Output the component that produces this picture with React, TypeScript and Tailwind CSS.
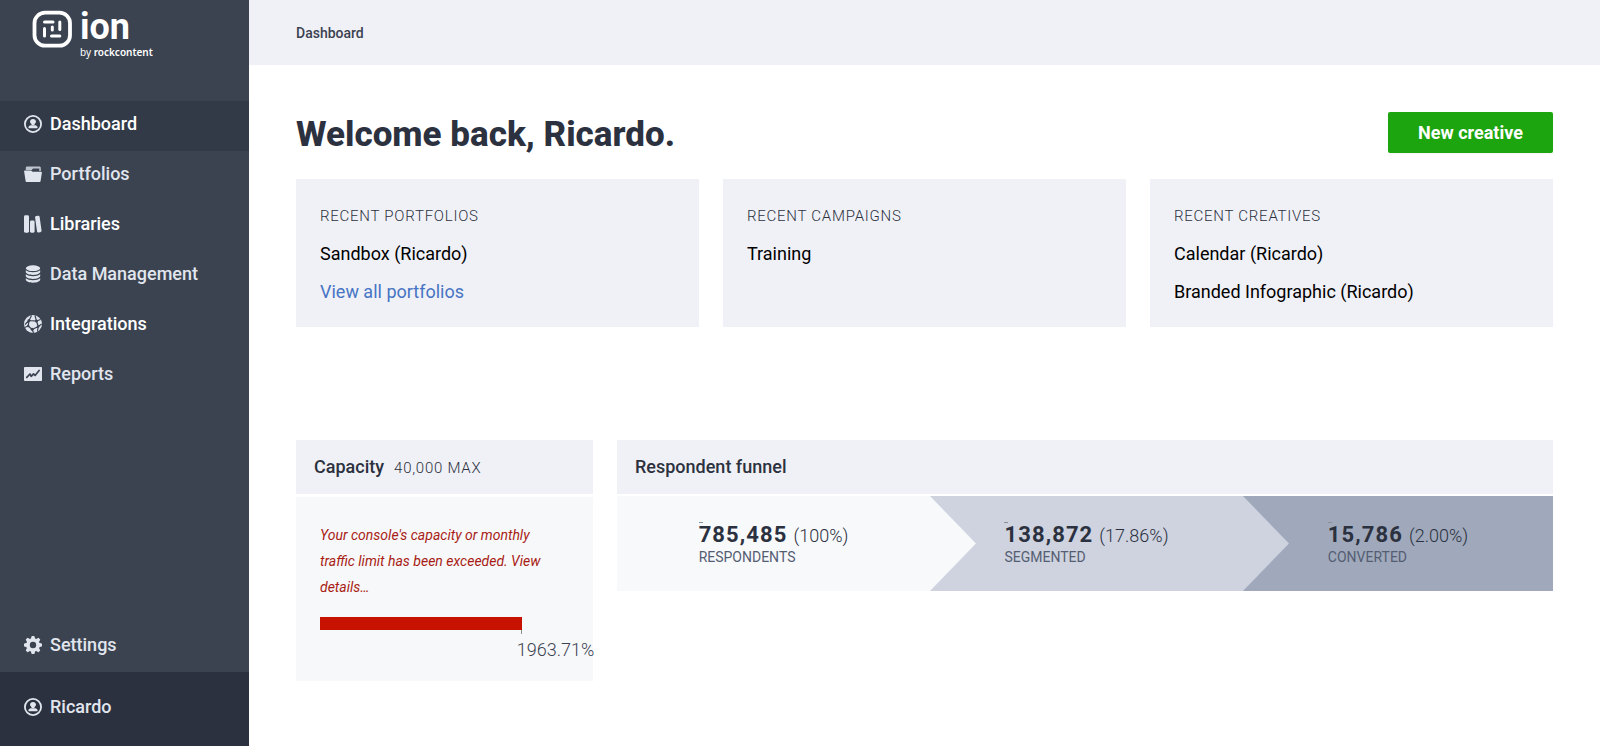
import React from 'react';

interface IconProps {
  className?: string;
}

interface NavItem {
  label: string;
  icon: React.FC<IconProps>;
  active?: boolean;
  bright?: boolean;
}

interface RecentCard {
  title: string;
  items: string[];
  link?: string;
}

interface FunnelStep {
  label: string;
  value: string;
  percent: string;
  background: string;
  arrow?: string;
}

const UserIcon: React.FC<IconProps> = ({ className }) => (
  <svg className={className} viewBox="0 0 18 18" fill="currentColor" aria-hidden="true">
    <circle cx="9" cy="9" r="8.100" fill="none" stroke="currentColor" strokeWidth="1.800" />
    <path d="M9 3.900c1.800 0 3 1.200 3 2.700 0 1.100-.7 2-1.500 2.400v.9H7.500V9C6.700 8.600 6 7.700 6 6.600c0-1.500 1.200-2.700 3-2.700z" />
    <path d="M6.800 10.300h4.400c1.300.3 2.200 1 2.400 2.100.1.500-.1.800-.6.8H5c-.5 0-.7-.3-.6-.8.2-1.100 1.100-1.800 2.400-2.100z" />
  </svg>
);

const FolderIcon: React.FC<IconProps> = ({ className }) => (
  <svg className={className} viewBox="0 0 18 18" fill="currentColor" aria-hidden="true">
    <path d="M1.800 5V3c0-.8.6-1.400 1.400-1.400h12.200c.8 0 1.400.6 1.400 1.400v3h-1.500V3.400H9L7.800 5z" opacity=".8" />
    <path d="M.8 5.500h6.400l1.300 1.300h8.700c.5 0 .8.300.7.8l-1.300 8.300c-.1.600-.6 1-1.200 1H2.800c-.6 0-1.100-.4-1.200-1L.1 6.300c-.1-.5.200-.8.700-.8z" />
  </svg>
);

const BooksIcon: React.FC<IconProps> = ({ className }) => (
  <svg className={className} viewBox="0 0 18 18" fill="currentColor" aria-hidden="true">
    <rect x="0" y="0.300" width="5" height="17.400" rx="1.400" />
    <rect x="6" y="5.500" width="4.600" height="12.200" rx="1.400" />
    <rect x="12" y="0.800" width="4.600" height="16.600" rx="1.400" transform="rotate(-8 14.300 9)" />
  </svg>
);

const DatabaseIcon: React.FC<IconProps> = ({ className }) => (
  <svg className={className} viewBox="0 0 18 18" fill="currentColor" aria-hidden="true">
    <ellipse cx="9" cy="3.200" rx="7.200" ry="2.900" />
    <path d="M1.800 5.200c1.400 1.300 4.100 2 7.200 2s5.800-.7 7.200-2V7c0 1.500-3.200 2.900-7.200 2.900S1.800 8.500 1.800 7z" />
    <path d="M1.800 9.200c1.400 1.300 4.100 2 7.200 2s5.800-.7 7.200-2V11c0 1.500-3.200 2.900-7.200 2.900S1.800 12.500 1.800 11z" />
    <path d="M1.800 13.200c1.400 1.300 4.100 2 7.200 2s5.800-.7 7.200-2v1.600c0 1.500-3.200 2.900-7.200 2.900s-7.200-1.400-7.200-2.900z" />
  </svg>
);

const NetworkIcon: React.FC<IconProps> = ({ className }) => (
  <svg className={className} viewBox="0 0 18 18" fill="currentColor" aria-hidden="true">
    <circle cx="9" cy="9" r="9" />
    <g fill="none" stroke="#3b4251" strokeWidth="1.200">
      <path d="M7.500 0.500 5 5.500 1 9.500M5 5.500l7.500.5L11 .5M12.500 6l1.700 5.500-6 3-4-3.500L5 5.500M14.200 11.500l3.500-2.500M8.200 14.500 9.500 18M4.200 11l-3.600 1.500M12.500 6l4-1.500M14.200 11.500l-.7 5" />
    </g>
    <g fill="#3b4251">
      <circle cx="5" cy="5.500" r="1.500" />
      <circle cx="12.500" cy="6" r="1.500" />
      <circle cx="14.200" cy="11.500" r="1.300" />
      <circle cx="8.200" cy="14.300" r="1.500" />
      <circle cx="4.200" cy="11" r="1.200" />
    </g>
  </svg>
);

const ReportIcon: React.FC<IconProps> = ({ className }) => (
  <svg className={className} viewBox="0 0 18 18" fill="currentColor" aria-hidden="true">
    <rect x="0" y="2" width="18" height="14" rx="0.800" />
    <path
      d="M2.800 12.300 6 9l1.200 2.300 2.300-2.500 1.600 1.700 4-5"
      fill="none"
      stroke="#3b4251"
      strokeWidth="1.700"
      strokeLinecap="round"
      strokeLinejoin="round"
    />
  </svg>
);

const GearIcon: React.FC<IconProps> = ({ className }) => (
  <svg className={className} viewBox="0 0 18 18" fill="currentColor" aria-hidden="true">
    <circle cx="9" cy="9" r="5" fill="none" stroke="currentColor" strokeWidth="3.600" />
    {[0, 45, 90, 135, 180, 225, 270, 315].map((angle) => (
      <path key={angle} d="M6.600 3.500 7.500.5Q7.600 0 8.100 0h1.800q.5 0 .6.5l.9 3z" transform={`rotate(${angle} 9 9)`} />
    ))}
  </svg>
);

const Logo: React.FC = () => (
  <a href="#" className="flex gap-2 pl-8 text-white" aria-label="ion by rockcontent">
    <svg className="mt-2.5 h-[38px] w-10" viewBox="0 0 40 38" fill="none" stroke="currentColor" aria-hidden="true">
      <rect x="2.500" y="2.700" width="35.500" height="33" rx="10.500" strokeWidth="3.800" />
      <g strokeWidth="3" strokeLinecap="round">
        <path d="M12.500 12h8.500" />
        <path d="M27.800 12v7.500" />
        <path d="M27.800 26h-8.300" />
        <path d="M12.500 26v-7.500" />
        <path d="M20.300 17v3" />
      </g>
    </svg>
    <div className="flex flex-col pt-2">
      <span className="text-[36px]/[38px] font-bold">ion</span>
      <span className="font-['Noto_Sans',sans-serif] text-[10px]/[12px]">
        by <span className="font-semibold">rockcontent</span>
      </span>
    </div>
  </a>
);

const navItems: NavItem[] = [
  { label: 'Dashboard', icon: UserIcon, active: true, bright: true },
  { label: 'Portfolios', icon: FolderIcon },
  { label: 'Libraries', icon: BooksIcon, bright: true },
  { label: 'Data Management', icon: DatabaseIcon },
  { label: 'Integrations', icon: NetworkIcon, bright: true },
  { label: 'Reports', icon: ReportIcon },
];

const recentCards: RecentCard[] = [
  { title: 'Recent portfolios', items: ['Sandbox (Ricardo)'], link: 'View all portfolios' },
  { title: 'Recent campaigns', items: ['Training'] },
  { title: 'Recent creatives', items: ['Calendar (Ricardo)', 'Branded Infographic (Ricardo)'] },
];

const funnelSteps: FunnelStep[] = [
  { label: 'Respondents', value: '785,485', percent: '(100%)', background: 'bg-[#f7f9fb]', arrow: 'text-[#f7f9fb]' },
  { label: 'Segmented', value: '138,872', percent: '(17.86%)', background: 'bg-[#ced3df]', arrow: 'text-[#ced3df]' },
  { label: 'Converted', value: '15,786', percent: '(2.00%)', background: 'bg-[#9fa9bb]' },
];

const SidebarLink: React.FC<{ item: NavItem }> = ({ item }) => {
  const Icon = item.icon;
  return (
    <a
      href="#"
      className={`flex h-[50px] items-center gap-2 pb-1 pl-6 text-lg font-medium ${item.active ? 'bg-[#323a48]' : ''} ${
        item.bright ? 'text-white' : 'text-[#e1e6ee]'
      }`}
    >
      <Icon className="h-[18px] w-[18px] text-[#e1e6ee]" />
      {item.label}
    </a>
  );
};

const Sidebar: React.FC = () => (
  <aside className="flex w-[249px] shrink-0 flex-col bg-[#3b4351]">
    <div className="h-[101px]">
      <Logo />
    </div>
    <nav>
      {navItems.map((item) => (
        <SidebarLink key={item.label} item={item} />
      ))}
    </nav>
    <div className="mt-auto">
      <SidebarLink item={{ label: 'Settings', icon: GearIcon }} />
    </div>
    <div className="bg-[#2c313f] py-3">
      <SidebarLink item={{ label: 'Ricardo', icon: UserIcon }} />
    </div>
  </aside>
);

const RecentPanel: React.FC<{ card: RecentCard }> = ({ card }) => (
  <section className="bg-[#f0f1f6] px-6 pt-6 pb-4">
    <h2 className="mb-1.5 text-[15px]/[26px] font-light tracking-wider text-[#2c313f] uppercase">{card.title}</h2>
    <ul className="text-lg/[38px] text-black">
      {card.items.map((item) => (
        <li key={item}>{item}</li>
      ))}
      {card.link && (
        <li>
          <a href="#" className="text-[#4674c4]">
            {card.link}
          </a>
        </li>
      )}
    </ul>
  </section>
);

const Capacity: React.FC = () => {
  const fill = 81.2;

  return (
    <section className="flex w-[297px] shrink-0 flex-col gap-[3px]">
      <header className="flex h-[54px] items-baseline gap-2.5 bg-[#f0f1f6] px-[18px] pt-3.5">
        <h2 className="text-lg/[26px] font-medium text-[#2c313f]">Capacity</h2>
        <span className="text-[15px] font-light tracking-wider text-[#2c313f]">40,000 MAX</span>
      </header>
      <div className="bg-[#f7f8fa] px-6 pt-[25px] pb-[15px]">
        <a href="#" className="block pr-3 text-sm/[26px] text-[#a81c14] italic">
          Your console's capacity or monthly traffic limit has been exceeded. View details…
        </a>
        <div className="mt-[17px] h-[13px] bg-[#c81200]" style={{ width: `${fill}%` }} />
        <div className="h-1 border-r border-[#8a8f9a]" style={{ width: `${fill}%` }} />
        <div className="flex whitespace-nowrap">
          <span className="w-[79%] shrink-0" />
          <span className="text-lg/[32px] font-light text-[#3b4251]">1963.71%</span>
        </div>
      </div>
    </section>
  );
};

const Funnel: React.FC = () => (
  <section className="flex flex-1 flex-col gap-0.5">
    <header className="h-[54px] bg-[#f0f1f6] px-[18px] pt-3.5">
      <h2 className="text-lg/[26px] font-medium text-[#2c313f]">Respondent funnel</h2>
    </header>
    <div className="grid grid-cols-[313fr_313fr_310fr]">
      {funnelSteps.map((step) => (
        <div key={step.label} className={`relative flex h-[95px] justify-center pt-[26px] ${step.background}`}>
          <div>
            <div className="h-px w-1 bg-[#8a8f9a]" />
            <p className="flex items-baseline gap-1.5 text-[#2c313f]">
              <strong className="text-[22px]/[24px] font-bold tracking-wider">{step.value}</strong>
              <span className="text-lg/[24px] font-light">{step.percent}</span>
            </p>
            <p className="text-sm/[18px] text-[#555d72] uppercase">{step.label}</p>
          </div>
          {step.arrow && (
            <svg
              className={`absolute top-0 left-full z-10 h-full w-[46px] ${step.arrow}`}
              viewBox="0 0 46 95"
              preserveAspectRatio="none"
              fill="currentColor"
              aria-hidden="true"
            >
              <path d="M0 0l46 47.500L0 95z" />
            </svg>
          )}
        </div>
      ))}
    </div>
  </section>
);

export default function App() {
  return (
    <div className="flex min-h-screen bg-white font-[Roboto,sans-serif]">
      <Sidebar />
      <div className="flex-1">
        <header className="flex h-[65px] items-center bg-[#f0f1f6] px-[47px]">
          <span className="text-sm font-medium text-[#3b4251]">Dashboard</span>
        </header>
        <main className="px-[47px] pt-[47px]">
          <div className="mb-[22px] flex items-start justify-between">
            <h1 className="text-[35px]/[45px] font-extrabold text-[#2c313f]">Welcome back, Ricardo.</h1>
            <button type="button" className="h-[41px] w-[165px] rounded-xs bg-[#1ca50f] text-lg font-bold text-white shadow-xs">
              New creative
            </button>
          </div>
          <div className="mb-[113px] grid grid-cols-3 gap-6">
            {recentCards.map((card) => (
              <RecentPanel key={card.title} card={card} />
            ))}
          </div>
          <div className="flex items-start gap-6">
            <Capacity />
            <Funnel />
          </div>
        </main>
      </div>
    </div>
  );
}
